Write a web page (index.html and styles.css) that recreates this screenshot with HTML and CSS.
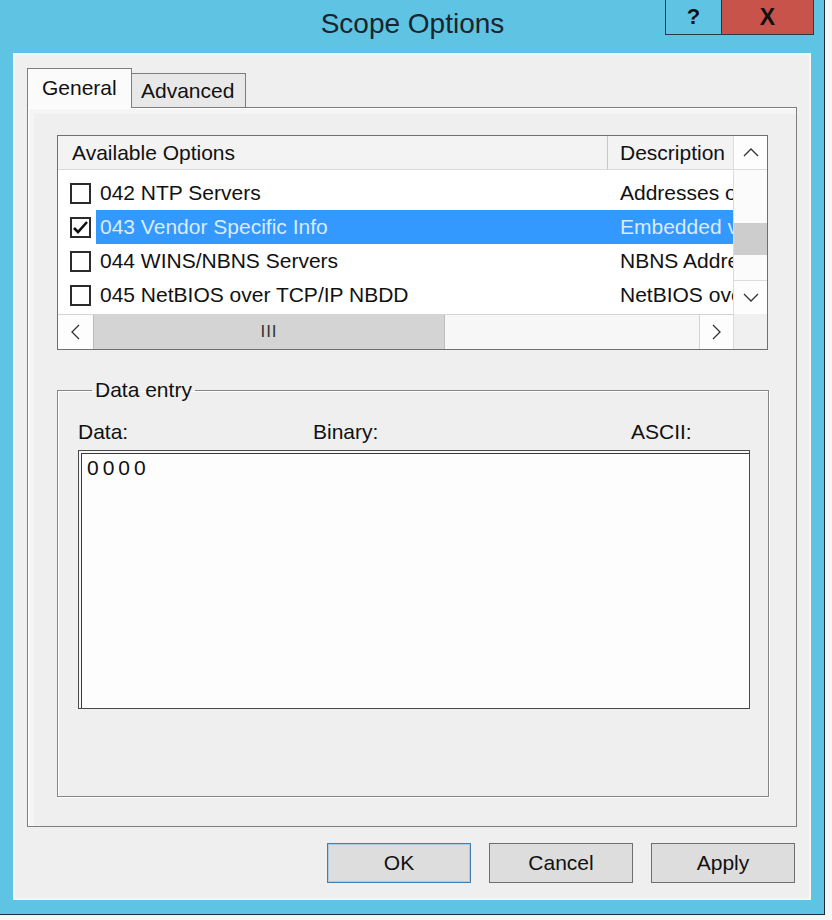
FILE: index.html
```html
<!DOCTYPE html>
<html lang="en">
<head>
    <meta charset="UTF-8">
    <title>Scope Options</title>
    <link rel="stylesheet" href="styles.css">
</head>
<body>
    <div class="window">
        <div class="titlebar">
            <div></div>
            <div class="title">Scope Options</div>
            <div class="caption-buttons">
                <span class="cap-help">?</span>
                <span class="cap-close">X</span>
            </div>
        </div>

        <div class="client">
            <div class="tabs">
                <div class="tab active">General</div>
                <div class="tab">Advanced</div>
            </div>

            <div class="panel">
                <div class="listview">
                    <div class="list-body">
                        <div class="list-header">
                            <div class="col-name">Available Options</div>
                            <div class="col-desc">Description</div>
                        </div>
                        <div class="rows">
                            <div class="row">
                                <span class="check"></span>
                                <div class="row-label">
                                    <span class="cell-name">042 NTP Servers</span>
                                    <span class="cell-desc">Addresses of Network Time Protocol servers</span>
                                </div>
                            </div>
                            <div class="row selected">
                                <span class="check">
                                    <svg width="17" height="15" viewBox="0 0 17 15"><path d="M2 8 L6 12 L15 2" fill="none" stroke="#111" stroke-width="2.6"/></svg>
                                </span>
                                <div class="row-label">
                                    <span class="cell-name">043 Vendor Specific Info</span>
                                    <span class="cell-desc">Embedded vendor-specific options</span>
                                </div>
                            </div>
                            <div class="row">
                                <span class="check"></span>
                                <div class="row-label">
                                    <span class="cell-name">044 WINS/NBNS Servers</span>
                                    <span class="cell-desc">NBNS Address(es) in priority order</span>
                                </div>
                            </div>
                            <div class="row">
                                <span class="check"></span>
                                <div class="row-label">
                                    <span class="cell-name">045 NetBIOS over TCP/IP NBDD</span>
                                    <span class="cell-desc">NetBIOS over TCP/IP NBDD address(es) in priority order</span>
                                </div>
                            </div>
                        </div>
                    </div>

                    <div class="vscroll">
                        <div class="sb-arrow sb-up">
                            <svg width="16" height="9" viewBox="0 0 16 9"><polyline points="1,8 8,1 15,8" fill="none" stroke="#333" stroke-width="1.3"/></svg>
                        </div>
                        <div class="vtrack"><div class="vthumb"></div></div>
                        <div class="sb-arrow sb-down">
                            <svg width="16" height="9" viewBox="0 0 16 9"><polyline points="1,1 8,8 15,1" fill="none" stroke="#333" stroke-width="1.3"/></svg>
                        </div>
                    </div>

                    <div class="hscroll">
                        <div class="sb-arrow sb-left">
                            <svg width="9" height="16" viewBox="0 0 9 16"><polyline points="8,1 1,8 8,15" fill="none" stroke="#333" stroke-width="1.3"/></svg>
                        </div>
                        <div class="hthumb">III</div>
                        <div class="htrack"></div>
                        <div class="sb-arrow sb-right">
                            <svg width="9" height="16" viewBox="0 0 9 16"><polyline points="1,1 8,8 1,15" fill="none" stroke="#333" stroke-width="1.3"/></svg>
                        </div>
                    </div>

                    <div class="corner"></div>
                </div>

                <fieldset class="group">
                    <legend>Data entry</legend>
                    <div class="entry-labels">
                        <span>Data:</span>
                        <span>Binary:</span>
                        <span>ASCII:</span>
                    </div>
                    <div class="data-box">0000</div>
                </fieldset>
            </div>

            <div class="buttons">
                <button class="btn default">OK</button>
                <button class="btn">Cancel</button>
                <button class="btn">Apply</button>
            </div>
        </div>
    </div>
</body>
</html>
```

FILE: styles.css
```css
:root {
    --frame: #5fc3e3;
    --frame-edge: #1f2d35;
    --face: #efefef;
    --text: #111111;
    --border-dark: #7d7d7d;
    --selection: #3399ff;
}

body {
    margin: 0;
    background: #f6f6f6;
    font-family: "Liberation Sans", Arial, sans-serif;
    font-size: 21px;
    color: var(--text);
}

.window {
    width: 824px;
    height: 914px;
    background: var(--frame);
    border-right: 1px solid var(--frame-edge);
    border-bottom: 1px solid var(--frame-edge);
    display: flex;
    flex-direction: column;
}

.titlebar {
    height: 53px;
    display: grid;
    grid-template-columns: 1fr auto 1fr;
}

.title {
    font-size: 28px;
    line-height: 47px;
    color: #1b252b;
    padding-left: 1px;
}

.caption-buttons {
    justify-self: end;
    align-self: start;
    margin-right: 10px;
    display: flex;
    height: 34px;
    border: 1px solid #2a3a44;
    border-top: none;
}

.cap-help,
.cap-close {
    display: flex;
    align-items: center;
    justify-content: center;
    font-weight: bold;
    font-size: 22px;
    color: #111;
}

.cap-help {
    width: 55px;
    border-right: 1px solid #2a3a44;
}

.cap-close {
    width: 91px;
    background: #c8534b;
    font-size: 23px;
}

.client {
    margin: 0 13px 14px 13px;
    height: 847px;
    box-sizing: border-box;
    padding: 15px 14px 17px 14px;
    background: var(--face);
    box-shadow: inset 0 0 0 2px #f6f6f6;
    display: flex;
    flex-direction: column;
}

/* tabs */
.tabs {
    height: 40px;
    margin-bottom: -1px;
    display: flex;
    align-items: flex-end;
}

.tab {
    box-sizing: border-box;
    height: 35px;
    padding: 0 11px 0 9px;
    line-height: 34px;
    background: #e8e8e8;
    border: 1px solid var(--border-dark);
    border-left: none;
    border-bottom: none;
}

.tab.active {
    height: 40px;
    width: 105px;
    padding-left: 14px;
    line-height: 38px;
    background: #fbfbfb;
    border-left: 1px solid var(--border-dark);
    position: relative;
    z-index: 1;
}

.panel {
    box-sizing: border-box;
    height: 720px;
    width: 770px;
    padding: 27px 28px 0 29px;
    background: var(--face);
    border: 1px solid var(--border-dark);
    box-shadow: inset 1px 1px 0 #ffffff, inset 6px 6px 0 #f5f5f5;
}

/* list view */
.listview {
    width: 711px;
    height: 215px;
    box-sizing: border-box;
    border: 1px solid #6f6f6f;
    background: #ffffff;
    display: grid;
    grid-template-columns: 675px 1fr;
    grid-template-rows: 178px 1fr;
}

.list-body {
    overflow: hidden;
    white-space: nowrap;
}

.list-header {
    height: 33px;
    display: flex;
    background: #f3f3f3;
    border-bottom: 1px solid #dadada;
    line-height: 33px;
}

.col-name {
    flex-shrink: 0;
    width: 535px;
    padding-left: 14px;
    border-right: 1px solid #c9c9c9;
}

.col-desc {
    padding-left: 12px;
}

.rows {
    padding-top: 6px;
}

.row {
    height: 34px;
    display: flex;
    align-items: center;
}

.check {
    flex-shrink: 0;
    box-sizing: border-box;
    width: 21px;
    height: 21px;
    margin: 0 5px 0 12px;
    border: 2px solid #2b2b2b;
    background: #ffffff;
    display: flex;
    align-items: center;
    justify-content: center;
}

.row-label {
    display: flex;
    height: 34px;
    line-height: 34px;
    flex: 1;
    min-width: 0;
}

.cell-name {
    flex-shrink: 0;
    width: 520px;
    padding-left: 4px;
}

.cell-desc {
    overflow: hidden;
}

.row.selected .row-label {
    background: var(--selection);
    color: #d9ebff;
}

.vscroll {
    grid-row: 1;
    grid-column: 2;
    border-left: 1px solid #dcdcdc;
    background: #fbfbfb;
    display: flex;
    flex-direction: column;
}

.sb-arrow {
    display: flex;
    align-items: center;
    justify-content: center;
    background: #fdfdfd;
}

.sb-up {
    height: 33px;
    border-bottom: 1px solid #dcdcdc;
}

.sb-down {
    height: 33px;
    border-top: 1px solid #dcdcdc;
}

.vtrack {
    flex: 1;
}

.vthumb {
    height: 32px;
    margin-top: 53px;
    background: #cdcdcd;
}

.hscroll {
    grid-row: 2;
    grid-column: 1;
    display: flex;
    border-top: 1px solid #d4d4d4;
    background: #f7f7f7;
}

.sb-left {
    width: 35px;
    border-right: 1px solid #bdbdbd;
}

.sb-right {
    width: 33px;
    border-left: 1px solid #d4d4d4;
}

.hthumb {
    width: 350px;
    background: #d4d4d4;
    border-right: 1px solid #bdbdbd;
    text-align: center;
    font-size: 17px;
    line-height: 33px;
    color: #333;
    letter-spacing: 1px;
}

.htrack {
    flex: 1;
}

.corner {
    grid-row: 2;
    grid-column: 2;
    background: #f0f0f0;
    border-left: 1px solid #dcdcdc;
}

/* data entry group */
.group {
    margin: 28px 0 0 0;
    width: 712px;
    height: 419px;
    box-sizing: border-box;
    padding: 18px 18px 0 20px;
    border: 1px solid #858585;
    box-shadow: inset 1px 1px 0 #ffffff, 1px 1px 0 #ffffff;
}

.group legend {
    margin-left: 14px;
    padding: 0 3px;
    line-height: 24px;
}

.entry-labels {
    display: grid;
    grid-template-columns: 235px 318px auto;
    line-height: 24px;
}

.data-box {
    margin-top: 6px;
    height: 259px;
    box-sizing: border-box;
    padding: 5px 8px;
    background: #fdfdfd;
    border: 1px solid #4a4a4a;
    box-shadow: inset 2px 2px 0 #f7f7f7, inset 3px 3px 0 #3a3a3a;
    letter-spacing: 4px;
    line-height: 24px;
}

/* dialog buttons */
.buttons {
    margin-top: 16px;
    padding-right: 2px;
    display: flex;
    justify-content: flex-end;
    gap: 18px;
}

.btn {
    width: 144px;
    height: 40px;
    font-family: inherit;
    font-size: 21px;
    color: var(--text);
    background: #dddddd;
    border: 1px solid #6e6e6e;
    border-radius: 0;
}

.btn.default {
    border-color: #3f7fb3;
    box-shadow: inset 0 0 0 1px #a9cbe6;
}
```
